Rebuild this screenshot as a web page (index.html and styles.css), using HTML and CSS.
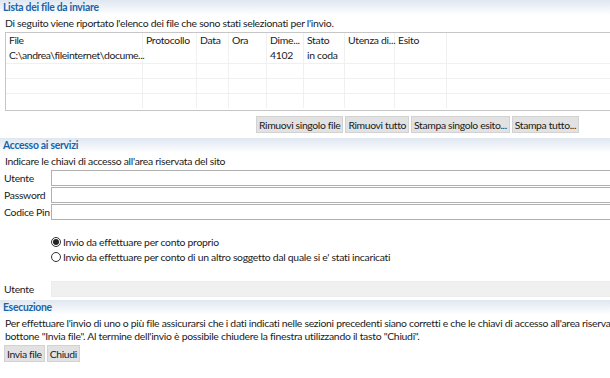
FILE: index.html
```html
<!DOCTYPE html>
<html lang="it">
<head>
    <meta charset="UTF-8">
    <title>Invio file</title>
    <link rel="stylesheet" href="styles.css">
</head>
<body>
    <section class="panel">
        <h2 class="panel-title">Lista dei file da inviare</h2>
        <p class="intro">Di seguito viene riportato l'elenco dei file che sono stati selezionati per l'invio.</p>
        <div class="file-table">
            <div class="row">
                <span class="c-file">File</span>
                <span class="c-prot">Protocollo</span>
                <span class="c-data">Data</span>
                <span class="c-ora">Ora</span>
                <span class="c-dim">Dime...</span>
                <span class="c-stato">Stato</span>
                <span class="c-ut">Utenza di...</span>
                <span class="c-esito">Esito</span>
                <span class="c-rest"></span>
            </div>
            <div class="row">
                <span class="c-file">C:\andrea\fileinternet\docume...</span>
                <span class="c-prot"></span>
                <span class="c-data"></span>
                <span class="c-ora"></span>
                <span class="c-dim">4102</span>
                <span class="c-stato">in coda</span>
                <span class="c-ut"></span>
                <span class="c-esito"></span>
                <span class="c-rest"></span>
            </div>
            <div class="row line">
                <span class="c-file"></span><span class="c-prot"></span><span class="c-data"></span><span class="c-ora"></span><span class="c-dim"></span><span class="c-stato"></span><span class="c-ut"></span><span class="c-esito"></span><span class="c-rest"></span>
            </div>
            <div class="row line">
                <span class="c-file"></span><span class="c-prot"></span><span class="c-data"></span><span class="c-ora"></span><span class="c-dim"></span><span class="c-stato"></span><span class="c-ut"></span><span class="c-esito"></span><span class="c-rest"></span>
            </div>
            <div class="row line">
                <span class="c-file"></span><span class="c-prot"></span><span class="c-data"></span><span class="c-ora"></span><span class="c-dim"></span><span class="c-stato"></span><span class="c-ut"></span><span class="c-esito"></span><span class="c-rest"></span>
            </div>
        </div>
        <div class="table-buttons">
            <button class="btn">Rimuovi singolo file</button>
            <button class="btn">Rimuovi tutto</button>
            <button class="btn">Stampa singolo esito...</button>
            <button class="btn">Stampa tutto...</button>
        </div>
    </section>

    <section class="panel">
        <h2 class="panel-title">Accesso ai servizi</h2>
        <p class="intro">Indicare le chiavi di accesso all'area riservata del sito</p>
        <div class="field">
            <label>Utente</label>
            <input type="text" class="input">
        </div>
        <div class="field">
            <label>Password</label>
            <input type="password" class="input">
        </div>
        <div class="field">
            <label>Codice Pin</label>
            <input type="text" class="input">
        </div>
        <div class="radios">
            <label class="radio"><span class="dot checked"></span>Invio da effettuare per conto proprio</label>
            <label class="radio"><span class="dot"></span>Invio da effettuare per conto di un altro soggetto dal quale si e' stati incaricati</label>
        </div>
        <div class="field disabled">
            <label>Utente</label>
            <input type="text" class="input" disabled>
        </div>
    </section>

    <section class="panel">
        <h2 class="panel-title">Esecuzione</h2>
        <p class="intro wrap">Per effettuare l'invio di uno o più file assicurarsi che i dati indicati nelle sezioni precedenti siano corretti e che le chiavi di accesso all'area riservata siano valide, quindi premere il<br>bottone "Invia file". Al termine dell'invio è possibile chiudere la finestra utilizzando il tasto "Chiudi".</p>
        <div class="actions">
            <button class="btn">Invia file</button>
            <button class="btn">Chiudi</button>
        </div>
    </section>
</body>
</html>
```

FILE: styles.css
```css
:root{
    --blu-titolo: #1b63a6;
    --bordo: #c6c6c6;
    --bordo-input: #b0b0b0;
    --riga: #f0f0f0;
    --font-f: Lato, "Open Sans", sans-serif;
    --font-p: 10.4px;
    --spazio-l: -0.28px;
}

*{
    margin: 0px;
    padding: 0px;
    box-sizing: border-box;
}

body{
    width: 610px;
    overflow: hidden;
    background-color: white;
    font-family: var(--font-f);
    font-size: var(--font-p);
    letter-spacing: var(--spazio-l);
    color: #1a1a1a;
}

.panel-title{
    height: 15px;
    line-height: 14px;
    padding-left: 3px;
    font-size: var(--font-p);
    font-weight: 700;
    color: var(--blu-titolo);
    background-image: linear-gradient(to bottom, #dfe7f1, #ffffff);
}

.intro{
    padding-left: 5px;
    height: 17px;
    line-height: 17px;
    white-space: nowrap;
}

.intro.wrap{
    height: auto;
    line-height: 13px;
    padding-top: 2px;
    padding-bottom: 2px;
}

/* tabella file */
.file-table{
    margin-left: 5px;
    width: 620px;
    height: 79px;
    border: 1px solid var(--bordo);
    border-right: none;
}

.row{
    display: flex;
    height: 15px;
    line-height: 15px;
}

.row.line{
    border-top: 1px solid var(--riga);
}

.row span{
    border-right: 1px solid var(--riga);
    padding-left: 3px;
    white-space: nowrap;
}

.row .c-file{
    width: 137px;
    letter-spacing: -0.4px;
}
.c-prot{ width: 54px; }
.c-data{ width: 32px; }
.c-ora{ width: 38px; }
.c-dim{ width: 37px; }
.c-stato{ width: 41px; }
.c-ut{ width: 50px; }
.c-esito{ width: 52px; }
.row .c-rest{ flex: 1; border-right: none; }

.table-buttons{
    display: flex;
    justify-content: flex-end;
    gap: 2px;
    padding: 5px 31px 5px 0px;
}

.btn{
    font-family: var(--font-f);
    font-size: var(--font-p);
    letter-spacing: -0.36px;
    color: #1a1a1a;
    height: 17px;
    padding: 0px 2px;
    background-color: #e2e2e2;
    border: 1px solid #d2d2d2;
    line-height: 14px;
}

/* campi di accesso */
.field{
    display: flex;
    align-items: center;
    height: 16px;
    margin-bottom: 1px;
}

.field label{
    width: 51px;
    padding-left: 4px;
    white-space: nowrap;
}

.input{
    flex: 1;
    height: 16px;
    border: 1px solid var(--bordo-input);
    border-right: none;
    background-color: white;
    margin-right: -2px;
}

.field.disabled{
    margin-bottom: 3px;
}

.field.disabled .input{
    background-color: #f0f0f0;
    border-color: #ececec;
}

.radios{
    display: flex;
    flex-direction: column;
    padding: 13px 0px 17px 51px;
}

.radio{
    display: flex;
    align-items: center;
    height: 15px;
    gap: 2px;
}

.dot{
    width: 10px;
    height: 10px;
    border: 1px solid #333;
    border-radius: 50%;
    display: flex;
    align-items: center;
    justify-content: center;
}

.dot.checked::after{
    content: "";
    width: 6px;
    height: 6px;
    border-radius: 50%;
    background-color: #222;
}

.actions{
    display: flex;
    gap: 2px;
    padding-left: 4px;
}
```
